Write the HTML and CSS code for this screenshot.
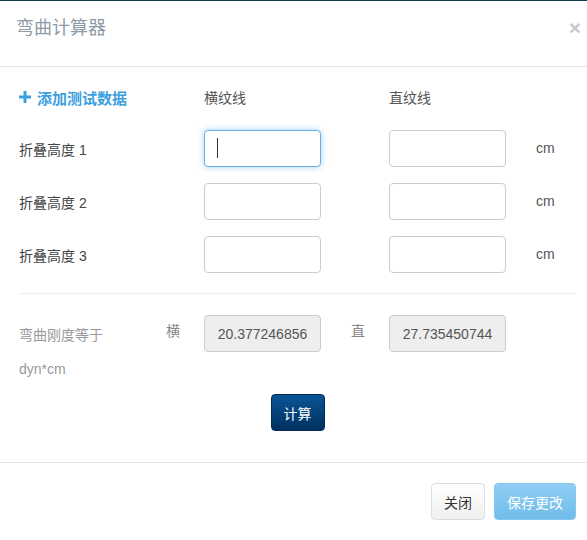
FILE: index.html
```html
<!DOCTYPE html>
<html lang="zh">
<head>
<meta charset="utf-8">
<title>弯曲计算器</title>
<link rel="stylesheet" href="styles.css">
</head>
<body>
<div class="modal">
  <div class="modal-header">
    <h4 class="modal-title">弯曲计算器</h4>
    <span class="close">×</span>
  </div>
  <div class="modal-body">
    <div class="grid">
      <a class="add-link span2"><svg class="plus" width="12" height="12" viewBox="0 0 12 12"><path d="M4.5 0h3v4.5H12v3H7.5V12h-3V7.5H0v-3h4.5z" fill="#3d9fe0"/></svg>添加测试数据</a>
      <div class="col-head c3">横纹线</div>
      <div class="col-head c6">直纹线</div>

      <div class="label span2">折叠高度 1</div>
      <div class="field c3 focused"><span class="caret"></span></div>
      <div class="field c6"></div>
      <div class="unit c8">cm</div>

      <div class="label span2">折叠高度 2</div>
      <div class="field c3"></div>
      <div class="field c6"></div>
      <div class="unit c8">cm</div>

      <div class="label span2">折叠高度 3</div>
      <div class="field c3"></div>
      <div class="field c6"></div>
      <div class="unit c8">cm</div>
    </div>
    <div class="divider"></div>
    <div class="grid result">
      <div class="muted c1">弯曲刚度等于</div>
      <div class="sub c2">横</div>
      <div class="field readonly c3">20.377246856</div>
      <div class="sub c5">直</div>
      <div class="field readonly c6">27.735450744</div>
    </div>
    <div class="muted dyn">dyn*cm</div>
    <div class="calc-wrap"><button class="btn btn-calc">计算</button></div>
  </div>
  <div class="modal-footer">
    <button class="btn btn-default">关闭</button>
    <button class="btn btn-save">保存更改</button>
  </div>
</div>
</body>
</html>
```
FILE: styles.css
```css
* { box-sizing: border-box; }
html, body { margin: 0; padding: 0; background: #fff; }
body {
  font-family: "Liberation Sans", "Noto Sans CJK SC", sans-serif;
  font-size: 14px;
  color: #333;
  width: 587px;
  height: 540px;
  overflow: hidden;
}
.modal { border-top: 1px solid #0c3a4f; }
.modal-header {
  height: 66px;
  border-bottom: 1px solid #e5e5e5;
  display: flex;
  justify-content: space-between;
  align-items: flex-start;
  padding: 15px 6px 0 16px;
}
.modal-title {
  margin: 0;
  font-size: 18px;
  font-weight: normal;
  line-height: 24px;
  color: #8d9aa5;
}
.close {
  font-size: 21px;
  font-weight: bold;
  line-height: 20px;
  color: #c8c8c8;
  margin-top: 2px;
}
.modal-body { padding: 13px 11px 31px 19px; }
.grid {
  display: grid;
  grid-template-columns: 147px 38px 117px 30px 38px 117px 30px auto;
  grid-template-rows: 34px 37px 37px 37px;
  row-gap: 16px;
  align-items: center;
}
.span2 { grid-column: 1 / span 2; }
.c1 { grid-column: 1; }
.c2 { grid-column: 2; }
.c3 { grid-column: 3; }
.c5 { grid-column: 5; }
.c6 { grid-column: 6; }
.c8 { grid-column: 8; }
.add-link {
  display: flex;
  align-items: center;
  gap: 6px;
  color: #3d9fe0;
  font-weight: bold;
  font-size: 15px;
  text-decoration: none;
}
.col-head { color: #555; }
.label { color: #444; }
.unit { color: #555; margin-top: -2px; }
.field {
  height: 37px;
  border: 1px solid #ccc;
  border-radius: 4px;
  background: #fff;
  position: relative;
}
.field.focused {
  border-color: #66afe9;
  box-shadow: 0 0 6px rgba(102, 175, 233, 0.6);
}
.caret {
  position: absolute;
  left: 12px;
  top: 7px;
  width: 1px;
  height: 20px;
  background: #333;
}
.field.readonly {
  background: #eee;
  color: #555;
  display: flex;
  align-items: center;
  justify-content: center;
}
.divider {
  border-top: 1px solid #eee;
  margin: 20px 0 21px;
}
.grid.result { grid-template-rows: 37px; }
.muted { color: #999; }
.sub { color: #888; align-self: start; margin-top: 5px; }
.dyn { margin-top: 7px; line-height: 20px; }
.calc-wrap { display: flex; justify-content: center; margin-top: 15px; }
.btn {
  font-family: inherit;
  font-size: 14px;
  height: 37px;
  padding: 0 12px;
  border-radius: 4px;
  border: 1px solid transparent;
  cursor: pointer;
}
.btn-calc {
  color: #fff;
  background: linear-gradient(#0a5596, #00305f);
  border-color: #002a55;
}
.modal-footer {
  border-top: 1px solid #e5e5e5;
  padding: 20px 11px 19px;
  display: flex;
  justify-content: flex-end;
  gap: 9px;
}
.btn-default {
  color: #333;
  background: linear-gradient(#fff, #f0f0f0);
  border-color: #ddd;
}
.btn-save {
  color: #fff;
  background: linear-gradient(#8fcdf3, #70bdeb);
  border-color: #86c7ef;
}
```
